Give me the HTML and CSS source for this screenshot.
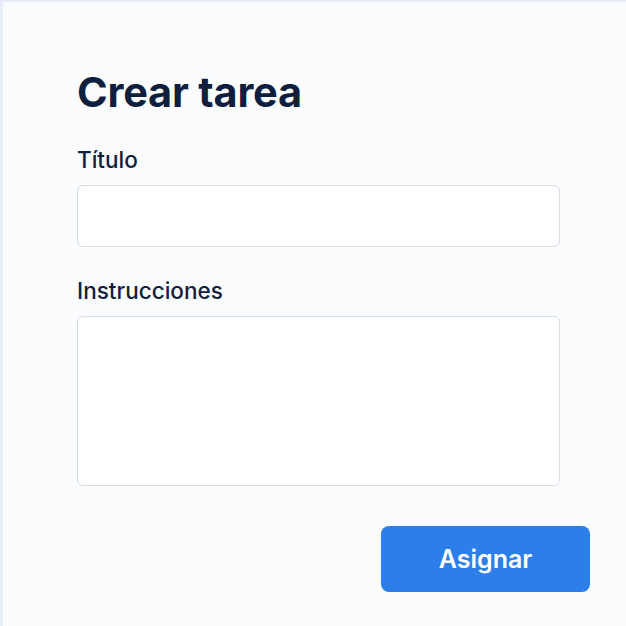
FILE: index.html
```html
<!DOCTYPE html>
<html lang="es">
<head>
<meta charset="utf-8">
<title>Crear tarea</title>
<link rel="stylesheet" href="styles.css">
</head>
<body>
<main class="page">
  <form class="card">
    <h1 class="title">Crear tarea</h1>
    <label class="field">
      <span class="label">Título</span>
      <input class="input" type="text">
    </label>
    <label class="field">
      <span class="label">Instrucciones</span>
      <textarea class="textarea"></textarea>
    </label>
    <div class="actions">
      <button class="btn" type="button">Asignar</button>
    </div>
  </form>
</main>
</body>
</html>
```
FILE: styles.css
```css
html, body {
  margin: 0;
  padding: 0;
  height: 100%;
}
body {
  background: #fbfcfe;
  font-family: Inter, "Noto Sans", sans-serif;
  color: #0f1f3d;
}
.page {
  box-sizing: border-box;
  height: 626px;
  border-top: 2px solid #e5ecf7;
  border-left: 3px solid #e7eef9;
  padding: 64px 36px 0 74px;
}
.card {
  display: flex;
  flex-direction: column;
}
.title {
  margin: 0 0 28px;
  font-size: 41.5px;
  line-height: 52px;
  font-weight: 700;
  color: #0e1e3e;
  letter-spacing: -0.2px;
}
.field {
  display: flex;
  flex-direction: column;
  width: 483px;
  margin-bottom: 30px;
}
.label {
  font-size: 22.5px;
  line-height: 28px;
  font-weight: 450;
  color: #13203b;
  margin-bottom: 11px;
}
.input, .textarea {
  box-sizing: border-box;
  width: 483px;
  border: 1.5px solid #d5dde7;
  border-radius: 6px;
  background: #ffffff;
  font: inherit;
  outline: none;
}
.input {
  height: 62px;
}
.textarea {
  height: 170px;
  resize: none;
}
.actions {
  display: flex;
  justify-content: flex-end;
  margin-top: 10px;
}
.btn {
  width: 209px;
  height: 66px;
  border: none;
  border-radius: 8px;
  background: #2c7ee9;
  color: #ffffff;
  font-family: Inter, "Noto Sans", sans-serif;
  font-size: 25px;
  font-weight: 600;
  cursor: pointer;
}
```
